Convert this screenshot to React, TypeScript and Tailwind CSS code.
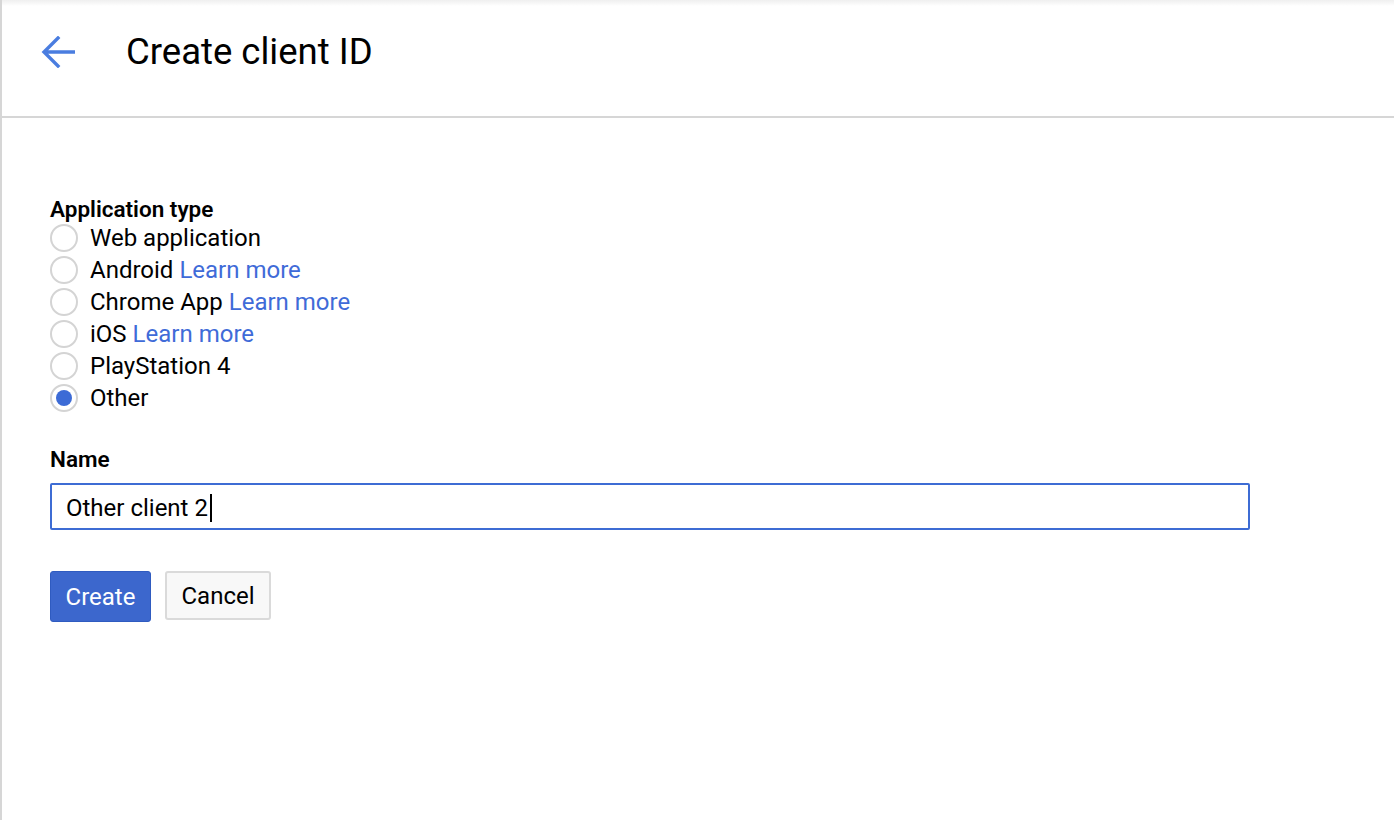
import React from 'react'

type OptionProps = {
  label: string
  learnMore?: boolean
  checked?: boolean
}

const options: OptionProps[] = [
  { label: 'Web application' },
  { label: 'Android', learnMore: true },
  { label: 'Chrome App', learnMore: true },
  { label: 'iOS', learnMore: true },
  { label: 'PlayStation 4' },
  { label: 'Other', checked: true },
]

function RadioRow({ label, learnMore, checked }: OptionProps) {
  return (
    <label className="flex h-8 items-center gap-3">
      <span className="flex h-[28px] w-[28px] shrink-0 items-center justify-center rounded-full border-2 border-[#d4d4d4] bg-white">
        {checked && <span className="h-[16px] w-[16px] rounded-full bg-[#3c6bd6]" />}
      </span>
      <span className="text-[24px] leading-8 text-black">
        {label}
        {learnMore && <a className="ml-[6px] text-[#3f6bd8]">Learn more</a>}
      </span>
    </label>
  )
}

export default function App() {
  return (
    <div className="relative h-[820px] w-full overflow-hidden border-l-2 border-[#d6d6d6] bg-white font-['Roboto',sans-serif]">
      <div className="pointer-events-none absolute inset-x-0 top-0 h-[6px] bg-gradient-to-b from-[#efefef] to-white" />

      <header className="relative flex h-[118px] items-center border-b-2 border-[#d6d6d6] pb-[12px]">
        <button type="button" className="ml-[36px] flex h-[40px] w-[40px] items-center justify-center">
          <svg width="34" height="32" viewBox="0 0 34 32" fill="none">
            <path
              d="M33 16H4M17 2L3 16l14 14"
              stroke="#4a7de0"
              strokeWidth="3.4"
              strokeLinecap="square"
            />
          </svg>
        </button>
        <h1 className="ml-[48px] text-[36.5px] font-normal leading-none text-black">Create client ID</h1>
      </header>

      <main className="px-[48px] pt-[78px]">
        <div className="text-[22.5px] font-semibold leading-[26px] text-black">Application type</div>
        <div className="flex flex-col">
          {options.map((option) => (
            <RadioRow key={option.label} {...option} />
          ))}
        </div>

        <div className="mt-[32px] text-[22.5px] font-semibold leading-[26px] text-black">Name</div>
        <div className="mt-[11px] flex h-[47px] w-[1200px] items-center rounded-[2px] border-2 border-[#3d6cd4] pl-[14px] pt-[2px]">
          <span className="text-[24px] leading-none text-black">Other client 2</span>
          <span className="ml-[2px] h-[28px] w-[2px] bg-black" />
        </div>

        <div className="mt-[41px] flex items-start gap-[14px]">
          <button
            type="button"
            className="h-[51px] w-[101px] rounded-[3px] border border-[#2f5bc0] bg-[#3c67cd] text-[24px] text-white"
          >
            Create
          </button>
          <button
            type="button"
            className="h-[49px] w-[106px] rounded-[3px] border-2 border-[#dadada] bg-[#f8f8f8] text-[24px] text-black"
          >
            Cancel
          </button>
        </div>
      </main>
    </div>
  )
}
